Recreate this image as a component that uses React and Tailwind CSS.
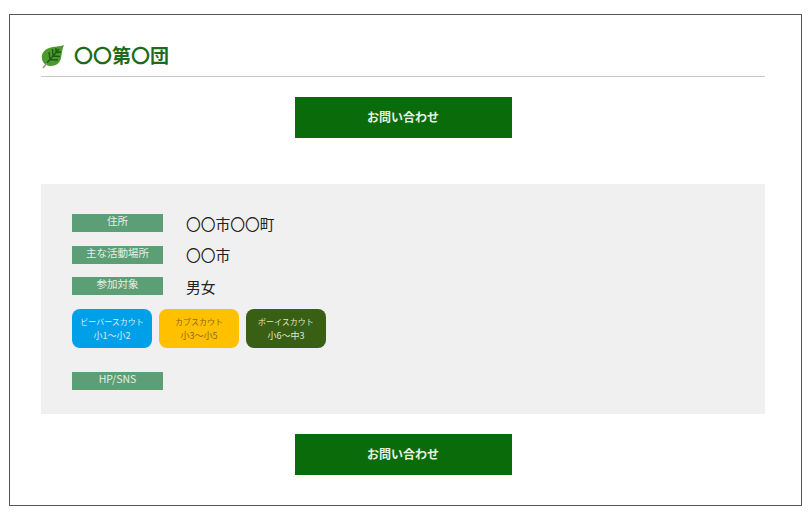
const FONT = { fontFamily: '"Noto Sans CJK JP", "Liberation Sans", sans-serif' };

const ROWS = [
  { label: "住所", value: "〇〇市〇〇町" },
  { label: "主な活動場所", value: "〇〇市" },
  { label: "参加対象", value: "男女" },
];

const BADGES = [
  { name: "ビーバースカウト", grade: "小1〜小2", className: "w-[80px] bg-[#00a0e9] text-[#d8f0fb]" },
  { name: "カブスカウト", grade: "小3〜小5", className: "w-[80px] bg-[#ffc000] text-[#8a6a10]" },
  { name: "ボーイスカウト", grade: "小6〜中3", className: "w-[80px] bg-[#385f14] text-[#dfe8d6]" },
];

function Leaf() {
  return (
    <svg width="24" height="25" viewBox="0 0 24 25" className="shrink-0">
      <path
        d="M23 1C19 3 13 2 8 4C3 6 0 10 1 15C2 20 6 22 10 22C15 22 19 19 20 14C21 9 21 5 23 1Z"
        fill="#4a9a2c"
      />
      <path
        d="M5 20L9 15.5M9 15.5C12 12 15 9 18 5M9 15.5L8 8M12 12L11.5 5M15 8.5L15 4M9 15.5L17 16M12 12L19 12.5M15 8.5L20 8"
        fill="none"
        stroke="#1d5a16"
        strokeWidth="1.4"
      />
      <path d="M2 24L6 19" stroke="#8f9a88" strokeWidth="1.6" />
    </svg>
  );
}

function ContactButton() {
  return (
    <div className="flex justify-center">
      <a className="flex h-[41px] w-[217px] items-center justify-center bg-[#0a6b0a] pb-[2px] text-[12px] font-bold text-[#e6f2e0]">
        お問い合わせ
      </a>
    </div>
  );
}

function Label({ children }) {
  return (
    <div className="flex h-[18px] w-[91px] shrink-0 items-center justify-center bg-[#5c9f76] pb-[3px] text-[10.5px] leading-none text-[#e3efe5]">
      {children}
    </div>
  );
}

export default function App() {
  return (
    <div className="h-[522px] w-[810px] bg-white pt-[14px] pl-[9px]" style={FONT}>
      <div className="h-[492px] w-[793px] border border-[#555] pr-[36px] pl-[31px] pt-[27px]">
        <header className="flex h-[35px] items-center gap-[9px] border-b border-[#c8c8c8] pb-[6px]">
          <Leaf />
          <h1 className="pb-[3px] text-[19px] leading-none font-bold text-[#1c6b1c]">〇〇第〇団</h1>
        </header>

        <div className="mt-[20px]">
          <ContactButton />
        </div>

        <section className="mt-[46px] h-[230px] bg-[#f0f0f0] px-[31px] pt-[30px]">
          <div className="flex flex-col gap-[13.5px]">
            {ROWS.map((row) => (
              <div key={row.label} className="flex h-[18px] items-center gap-[23px]">
                <Label>{row.label}</Label>
                <span className="pt-[2px] text-[14.75px] leading-none text-[#222]">{row.value}</span>
              </div>
            ))}
          </div>

          <div className="mt-[14px] flex gap-[7px]">
            {BADGES.map((badge) => (
              <div
                key={badge.name}
                className={`flex h-[39px] flex-col items-center justify-center rounded-[8px] text-[9px] leading-[14px] ${badge.className}`}
              >
                <span className="text-[8px]">{badge.name}</span>
                <span>{badge.grade}</span>
              </div>
            ))}
          </div>

          <div className="mt-[24px]">
            <Label>HP/SNS</Label>
          </div>
        </section>

        <div className="mt-[20px]">
          <ContactButton />
        </div>
      </div>
    </div>
  );
}
